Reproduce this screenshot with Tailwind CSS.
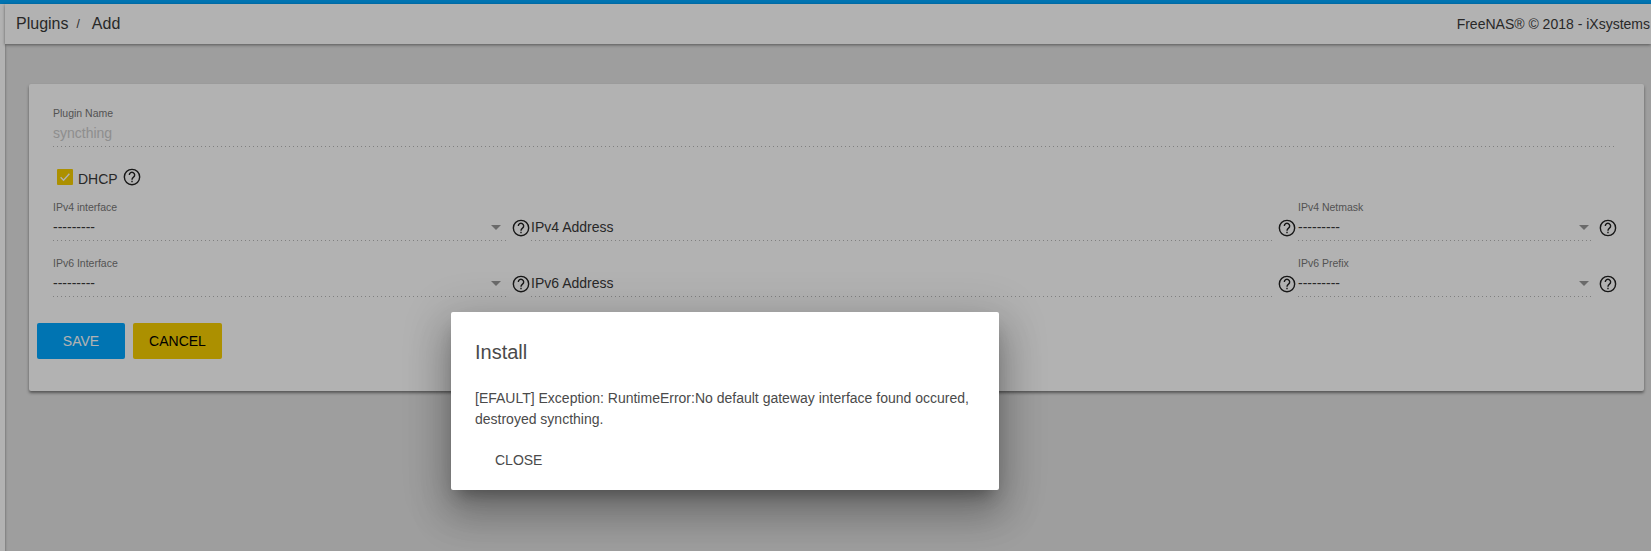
<!DOCTYPE html>
<html lang="en">
<head>
  <meta charset="UTF-8" />
  <script src="https://cdn.jsdelivr.net/npm/@tailwindcss/browser@4"></script>
  <title>Plugins / Add</title>
</head>
<body class="relative h-[551px] w-[1651px] overflow-hidden bg-[#e2e2e2] font-['Liberation_Sans',Arial,sans-serif] text-[#3a3a3a]">
  <div class="h-[4px] bg-[#00a7ff]"></div>

  <div class="flex h-full">
    <!-- sidenav edge -->
    <div class="w-[5px] shrink-0 bg-white shadow-[1px_0_2px_rgba(0,0,0,.2)]"></div>

    <div class="min-w-0 flex-1">
      <header class="flex h-[40px] items-center justify-between bg-white pl-[11px] pr-px shadow-[0_1px_3px_rgba(0,0,0,.45)]">
        <div class="flex items-center text-[16px]">
          <span>Plugins</span>
          <span class="ml-[8px] text-[12px]">/</span>
          <span class="ml-[12px]">Add</span>
        </div>
        <div class="text-[14px]">FreeNAS® © 2018 - iXsystems</div>
      </header>

      <main class="pl-[24px] pr-[7px] pt-[40px]">
        <section class="rounded-[2px] bg-white pb-[32px] pl-[8px] pr-[26px] pt-[23px] shadow-[0_2px_3px_rgba(0,0,0,.45)]">
          <div class="pl-[16px]">
            <div class="text-[10.5px] leading-[13px] text-[#777]">Plugin Name</div>
            <div class="flex h-[26px] items-center text-[14px] text-[#ccc]">syncthing</div>
            <div class="mr-[4px] h-px bg-[linear-gradient(to_right,rgba(0,0,0,.28)_0%,rgba(0,0,0,.28)_33%,transparent_0%)] bg-[length:4px_1px] bg-repeat-x"></div>

            <div class="mt-[22px] flex h-[16px] items-center pl-[4px]">
              <span class="flex h-[16px] w-[16px] items-center justify-center rounded-[1px] bg-[#f7ce00]">
                <svg class="h-[14px] w-[14px]" viewBox="0 0 24 24" fill="none" stroke="#fff" stroke-width="2.4"><path d="M4.5 12.5l5 5 10-11" /></svg>
              </span>
              <span class="ml-[5px] mt-[4px] text-[14px]">DHCP</span>
              <svg class="ml-[4px] h-[20px] w-[20px]" viewBox="0 0 24 24" fill="none" stroke="#222" stroke-width="1.7"><circle cx="12" cy="12" r="9.2" /><path d="M8.8 9.6a3.2 3.2 0 1 1 5 2.6c-1.1.8-1.8 1.4-1.8 3" /><path d="M12 16.4v2" /></svg>
            </div>

            <div class="mt-[15px] flex">
              <div class="flex w-[478px]">
                <div class="w-[453px]">
                  <div class="pt-px text-[10.5px] leading-[13px] text-[#777]">IPv4 interface</div>
                  <div class="flex h-[26px] items-center justify-between pr-[5px] text-[14px]">
                    <span>---------</span>
                    <span class="h-0 w-0 border-x-[5px] border-t-[5px] border-x-transparent border-t-[#999]"></span>
                  </div>
                  <div class="h-px bg-[linear-gradient(to_right,rgba(0,0,0,.28)_0%,rgba(0,0,0,.28)_33%,transparent_0%)] bg-[length:4px_1px] bg-repeat-x"></div>
                </div>
                <svg class="ml-[5px] mt-[18px] h-[20px] w-[20px]" viewBox="0 0 24 24" fill="none" stroke="#222" stroke-width="1.7"><circle cx="12" cy="12" r="9.2" /><path d="M8.8 9.6a3.2 3.2 0 1 1 5 2.6c-1.1.8-1.8 1.4-1.8 3" /><path d="M12 16.4v2" /></svg>
              </div>
              <div class="flex w-[767px]">
                <div class="w-[741px]">
                  <div class="h-[14px]"></div>
                  <div class="flex h-[26px] items-center text-[14px]">IPv4 Address</div>
                  <div class="h-px bg-[linear-gradient(to_right,rgba(0,0,0,.28)_0%,rgba(0,0,0,.28)_33%,transparent_0%)] bg-[length:4px_1px] bg-repeat-x"></div>
                </div>
                <svg class="ml-[5px] mt-[18px] h-[20px] w-[20px]" viewBox="0 0 24 24" fill="none" stroke="#222" stroke-width="1.7"><circle cx="12" cy="12" r="9.2" /><path d="M8.8 9.6a3.2 3.2 0 1 1 5 2.6c-1.1.8-1.8 1.4-1.8 3" /><path d="M12 16.4v2" /></svg>
              </div>
              <div class="flex w-[320px]">
                <div class="w-[297px]">
                  <div class="pt-px text-[10.5px] leading-[13px] text-[#777]">IPv4 Netmask</div>
                  <div class="flex h-[26px] items-center justify-between pr-[5px] text-[14px]">
                    <span>---------</span>
                    <span class="h-0 w-0 border-x-[5px] border-t-[5px] border-x-transparent border-t-[#999]"></span>
                  </div>
                  <div class="h-px bg-[linear-gradient(to_right,rgba(0,0,0,.28)_0%,rgba(0,0,0,.28)_33%,transparent_0%)] bg-[length:4px_1px] bg-repeat-x"></div>
                </div>
                <svg class="ml-[4px] mt-[18px] h-[20px] w-[20px]" viewBox="0 0 24 24" fill="none" stroke="#222" stroke-width="1.7"><circle cx="12" cy="12" r="9.2" /><path d="M8.8 9.6a3.2 3.2 0 1 1 5 2.6c-1.1.8-1.8 1.4-1.8 3" /><path d="M12 16.4v2" /></svg>
              </div>
            </div>

            <div class="mt-[15px] flex">
              <div class="flex w-[478px]">
                <div class="w-[453px]">
                  <div class="pt-px text-[10.5px] leading-[13px] text-[#777]">IPv6 Interface</div>
                  <div class="flex h-[26px] items-center justify-between pr-[5px] text-[14px]">
                    <span>---------</span>
                    <span class="h-0 w-0 border-x-[5px] border-t-[5px] border-x-transparent border-t-[#999]"></span>
                  </div>
                  <div class="h-px bg-[linear-gradient(to_right,rgba(0,0,0,.28)_0%,rgba(0,0,0,.28)_33%,transparent_0%)] bg-[length:4px_1px] bg-repeat-x"></div>
                </div>
                <svg class="ml-[5px] mt-[18px] h-[20px] w-[20px]" viewBox="0 0 24 24" fill="none" stroke="#222" stroke-width="1.7"><circle cx="12" cy="12" r="9.2" /><path d="M8.8 9.6a3.2 3.2 0 1 1 5 2.6c-1.1.8-1.8 1.4-1.8 3" /><path d="M12 16.4v2" /></svg>
              </div>
              <div class="flex w-[767px]">
                <div class="w-[741px]">
                  <div class="h-[14px]"></div>
                  <div class="flex h-[26px] items-center text-[14px]">IPv6 Address</div>
                  <div class="h-px bg-[linear-gradient(to_right,rgba(0,0,0,.28)_0%,rgba(0,0,0,.28)_33%,transparent_0%)] bg-[length:4px_1px] bg-repeat-x"></div>
                </div>
                <svg class="ml-[5px] mt-[18px] h-[20px] w-[20px]" viewBox="0 0 24 24" fill="none" stroke="#222" stroke-width="1.7"><circle cx="12" cy="12" r="9.2" /><path d="M8.8 9.6a3.2 3.2 0 1 1 5 2.6c-1.1.8-1.8 1.4-1.8 3" /><path d="M12 16.4v2" /></svg>
              </div>
              <div class="flex w-[320px]">
                <div class="w-[297px]">
                  <div class="pt-px text-[10.5px] leading-[13px] text-[#777]">IPv6 Prefix</div>
                  <div class="flex h-[26px] items-center justify-between pr-[5px] text-[14px]">
                    <span>---------</span>
                    <span class="h-0 w-0 border-x-[5px] border-t-[5px] border-x-transparent border-t-[#999]"></span>
                  </div>
                  <div class="h-px bg-[linear-gradient(to_right,rgba(0,0,0,.28)_0%,rgba(0,0,0,.28)_33%,transparent_0%)] bg-[length:4px_1px] bg-repeat-x"></div>
                </div>
                <svg class="ml-[4px] mt-[18px] h-[20px] w-[20px]" viewBox="0 0 24 24" fill="none" stroke="#222" stroke-width="1.7"><circle cx="12" cy="12" r="9.2" /><path d="M8.8 9.6a3.2 3.2 0 1 1 5 2.6c-1.1.8-1.8 1.4-1.8 3" /><path d="M12 16.4v2" /></svg>
              </div>
            </div>
          </div>

          <div class="mt-[26px] flex gap-[8px]">
            <button class="h-[36px] w-[88px] rounded-[2px] bg-[#00a7ff] text-[14px] text-white">SAVE</button>
            <button class="h-[36px] w-[89px] rounded-[2px] bg-[#f7ce00] text-[14px] text-black">CANCEL</button>
          </div>
        </section>
      </main>
    </div>
  </div>

  <!-- dialog backdrop -->
  <div class="absolute inset-0 bg-black/30"></div>

  <div class="absolute left-[451px] top-[312px] h-[178px] w-[548px] rounded-[2px] bg-white px-[24px] pt-[24px] text-[#4a4a4a] shadow-[0_11px_15px_-7px_rgba(0,0,0,.3),0_24px_38px_3px_rgba(0,0,0,.22),0_9px_46px_8px_rgba(0,0,0,.14)]">
    <h2 class="text-[20px] leading-[32px]">Install</h2>
    <p class="mt-[20px] text-[14px] leading-[21px]">[EFAULT] Exception: RuntimeError:No default gateway interface found occured, destroyed syncthing.</p>
    <button class="ml-[20px] mt-[20px] text-[14px] leading-[20px]">CLOSE</button>
  </div>
</body>
</html>
